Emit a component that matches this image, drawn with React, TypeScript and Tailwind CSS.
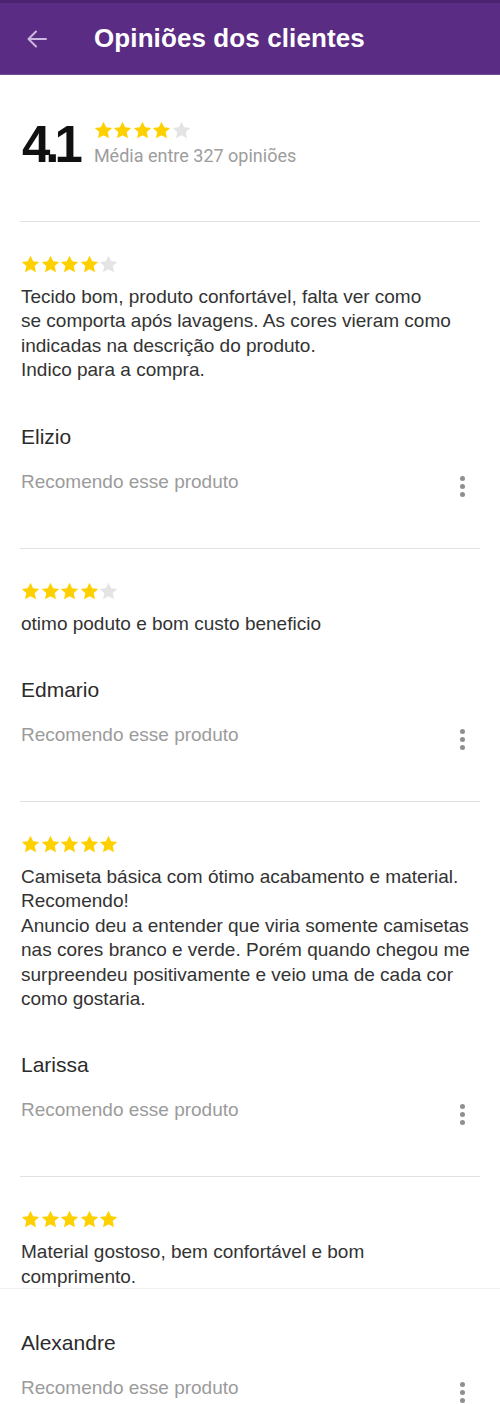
import React from "react";

const FONT = { fontFamily: '"Liberation Sans", Arial, sans-serif' };

function Star({ filled }: { filled: boolean }) {
  return (
    <svg width="19" height="18" viewBox="0 0 24 23" className="block">
      <path
        d="M12 0.8l3.4 7.2 7.8 0.9-5.8 5.3 1.6 7.8L12 18.1 5 22l1.6-7.8L0.8 8.9l7.8-0.9z"
        fill={filled ? "#ffd000" : "#e4e4e4"}
      />
    </svg>
  );
}

function Stars({ n }: { n: number }) {
  return (
    <div className="flex gap-[0.5px]">
      {[0, 1, 2, 3, 4].map((i) => (
        <Star key={i} filled={i < n} />
      ))}
    </div>
  );
}

function Kebab() {
  return (
    <div className="flex flex-col items-center gap-[3px] mt-[6px]">
      <span className="block w-[5px] h-[5px] rounded-full bg-[#8f8f8f]" />
      <span className="block w-[5px] h-[5px] rounded-full bg-[#8f8f8f]" />
      <span className="block w-[5px] h-[5px] rounded-full bg-[#8f8f8f]" />
    </div>
  );
}

function Footer({ name }: { name: string }) {
  return (
    <div className="px-[21px]">
      <div className="text-[21px] leading-[24px] text-[#2b2b2b]">{name}</div>
      <div className="mt-[21px] h-[24px] flex items-start justify-between pr-[14px]">
        <div className="text-[19px] leading-[24px] text-[#9b9b9b]">Recomendo esse produto</div>
        <Kebab />
      </div>
    </div>
  );
}

function Review({ n, lines, name }: { n: number; lines: string[]; name: string }) {
  return (
    <div className="border-t border-[#e2e2e2] mx-[20px]">
      <div className="-mx-[20px] pt-[33px] pb-[54px]">
        <div className="px-[21px]">
          <Stars n={n} />
          <div className="mt-[12px] text-[19px] leading-[24.4px] text-[#333333]">
            {lines.map((l, i) => (
              <div key={i} className="whitespace-nowrap">
                {l}
              </div>
            ))}
          </div>
        </div>
        <div className="mt-[42px]">
          <Footer name={name} />
        </div>
      </div>
    </div>
  );
}

export default function App() {
  return (
    <div className="w-[500px] h-[1404px] overflow-hidden bg-white" style={FONT}>
      <header className="h-[75px] bg-[#5b2c83] border-t-[3px] border-[#4a2270] border-b border-b-[#6f4a93] flex items-center">
        <svg width="24" height="24" viewBox="0 0 24 24" className="ml-[25px] mt-[1px]">
          <path
            d="M21 12H3.5M11 4.5L3.5 12l7.5 7.5"
            fill="none"
            stroke="#cdb8e0"
            strokeWidth="2"
            strokeLinecap="round"
            strokeLinejoin="round"
          />
        </svg>
        <h1 className="ml-[45px] text-[26px] font-bold text-white tracking-[0.1px]">Opiniões dos clientes</h1>
      </header>

      <section className="px-[22px] pt-[47px] pb-[53px] flex items-center">
        <div className="text-[51px] leading-[46px] font-bold tracking-[-5px] text-[#111]">4.1</div>
        <div className="ml-[16px] -mt-[3px]">
          <Stars n={4} />
          <div className="mt-[6px] text-[18px] leading-[22px] text-[#9d9d9d]" style={{ fontFamily: "Roboto, sans-serif" }}>
            Média entre 327 opiniões
          </div>
        </div>
      </section>

      <Review
        n={4}
        lines={[
          "Tecido bom, produto confortável, falta ver como",
          "se comporta após lavagens. As cores vieram como",
          "indicadas na descrição do produto.",
          "Indico para a compra.",
        ]}
        name="Elizio"
      />
      <Review n={4} lines={["otimo poduto e bom custo beneficio"]} name="Edmario" />
      <Review
        n={5}
        lines={[
          "Camiseta básica com ótimo acabamento e material.",
          "Recomendo!",
          "Anuncio deu a entender que viria somente camisetas",
          "nas cores branco e verde. Porém quando chegou me",
          "surpreendeu positivamente e veio uma de cada cor",
          "como gostaria.",
        ]}
        name="Larissa"
      />

      <div className="border-t border-[#e2e2e2] mx-[20px]">
        <div className="-mx-[20px] pt-[33px]">
          <div className="px-[21px]">
            <Stars n={5} />
            <div className="mt-[12px] text-[19px] leading-[24.4px] text-[#333333]">
              <div className="whitespace-nowrap">Material gostoso, bem confortável e bom</div>
              <div className="whitespace-nowrap">comprimento.</div>
            </div>
          </div>
          <div className="border-t border-[#f2f2f2] pt-[42px] -mt-[1px]">
            <Footer name="Alexandre" />
          </div>
        </div>
      </div>
    </div>
  );
}
